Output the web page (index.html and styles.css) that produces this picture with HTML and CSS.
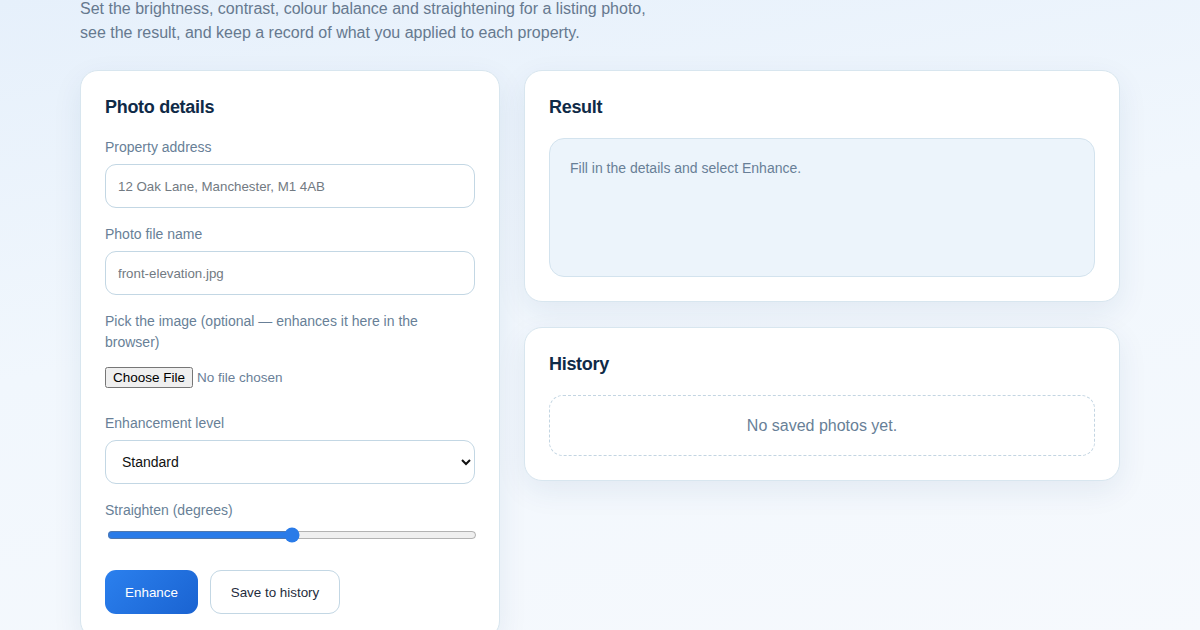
FILE: index.html
```html
<!DOCTYPE html>
<html lang="en">
<head>
<meta charset="utf-8">
<title>Listing photo enhancer</title>
<link rel="stylesheet" href="styles.css">
</head>
<body>
<div class="page">
	<p class="intro">Set the brightness, contrast, colour balance and straightening for a listing photo,<br>see the result, and keep a record of what you applied to each property.</p>

	<div class="layout">
		<form class="card form-card">
			<h2>Photo details</h2>

			<div class="field">
				<label for="address">Property address</label>
				<input type="text" id="address" class="text-input" placeholder="12 Oak Lane, Manchester, M1 4AB">
			</div>

			<div class="field">
				<label for="filename">Photo file name</label>
				<input type="text" id="filename" class="text-input" placeholder="front-elevation.jpg">
			</div>

			<div class="field">
				<label for="picker">Pick the image (optional — enhances it here in the browser)</label>
				<input type="file" id="picker" class="file-input" accept="image/*">
			</div>

			<div class="field">
				<label for="level">Enhancement level</label>
				<select id="level" class="select-input">
					<option>Light</option>
					<option selected>Standard</option>
					<option>Strong</option>
				</select>
			</div>

			<div class="field">
				<label for="angle">Straighten (degrees)</label>
				<input type="range" id="angle" class="range-input" min="-10" max="10" step="0.5" value="0">
			</div>

			<div class="actions">
				<button type="button" class="btn btn-primary">Enhance</button>
				<button type="button" class="btn btn-ghost">Save to history</button>
			</div>
		</form>

		<div class="side">
			<section class="card">
				<h2>Result</h2>
				<div class="result-box">Fill in the details and select Enhance.</div>
			</section>

			<section class="card">
				<h2>History</h2>
				<div class="empty">No saved photos yet.</div>
			</section>
		</div>
	</div>
</div>
</body>
</html>
```

FILE: styles.css
```css
*{margin:0; padding:0; box-sizing:border-box;}
body{font-family:"Liberation Sans", Arial, sans-serif; color:#0f2a47; background:linear-gradient(170deg, #e6f0fb 0%, #f1f7fd 45%, #f6f9fd 100%); min-height:630px; overflow:hidden;}

.page{width:1040px; margin:0 auto;}
.intro{margin-top:-3px; font-size:16px; line-height:24px; color:#66798f;}

.layout{display:grid; grid-template-columns:420px 1fr; gap:24px; margin-top:25px; align-items:start;}
.side{display:flex; flex-direction:column; gap:25px;}

.card{background:#fff; border:1px solid #d8e6ef; border-radius:18px; padding:24px; box-shadow:0 10px 30px rgba(30,70,110,0.08);}
.card h2{font-size:18px; line-height:24px; font-weight:bold; color:#0f2a47; letter-spacing:-0.3px;}

/* form column */
.form-card h2{margin-bottom:18px;}
.field{margin-bottom:16px;}
.field label{display:block; font-size:14px; line-height:20px; color:#687f97; margin-bottom:7px;}
.field label[for="picker"]{line-height:21px;}

.text-input, .select-input{display:block; width:100%; height:44px; border:1px solid #c3d7e4; border-radius:11px; background:#fff; font-family:inherit; outline:none;}
.text-input{padding:0 12px; font-size:13.3px; color:#333;}
.text-input::placeholder{color:#727a82;}
.select-input{padding:0 12px; font-size:14px; color:#111;}

.file-input{display:block; font-family:inherit; font-size:13.5px; color:#6a8098; margin-top:14px; margin-bottom:25px;}
.file-input::file-selector-button{font-family:inherit; font-size:13.5px; color:#000; margin-right:4px;}

.range-input{display:block; width:370px; margin:7px 0 2px 2px; accent-color:#2a7be8;}

.actions{display:flex; gap:12px; margin-top:27px;}
.btn{height:44px; border-radius:11px; font-family:inherit; font-size:13.4px; cursor:pointer;}
.btn-primary{width:93px; border:none; color:#fff; background:linear-gradient(135deg, #2b80ee, #1a63d1);}
.btn-ghost{width:130px; border:1px solid #c3d7e4; background:#fff; color:#1f2d3d;}

/* result column */
.result-box{margin-top:19px; height:139px; padding:19px 20px; border:1px solid #d3e3ee; border-radius:15px; background:#ecf4fb; font-size:14px; line-height:20px; color:#687f97;}

.empty{margin-top:19px; height:61px; border:1px dashed #c3d5e2; border-radius:14px; display:flex; align-items:center; justify-content:center; font-size:16px; color:#687f97;}
```
